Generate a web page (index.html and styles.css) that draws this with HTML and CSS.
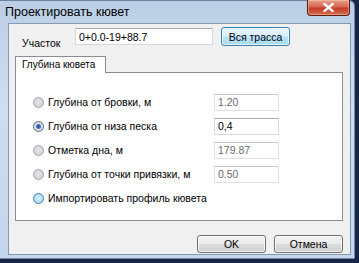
FILE: index.html
```html
<!DOCTYPE html>
<html lang="ru">
<head>
  <meta charset="UTF-8" />
  <meta name="viewport" content="width=device-width, initial-scale=1" />
  <title>Проектировать кювет</title>
  <link rel="stylesheet" href="styles.css">
</head>
<body>

<div class="window">
  <div class="titlebar">
    <span class="title">Проектировать кювет</span>
    <button class="close-btn" aria-label="Закрыть">
      <svg width="11" height="9" viewBox="0 0 11 9">
        <path d="M1.5 1 L9.5 8 M9.5 1 L1.5 8" stroke="#fff" stroke-width="2.4" stroke-linecap="square"/>
      </svg>
    </button>
  </div>

  <div class="client">
    <div class="top-row">
      <label class="section-label">Участок</label>
      <input class="text-box section-input" type="text" value="0+0.0-19+88.7">
      <button class="btn btn-hot">Вся трасса</button>
    </div>

    <div class="tabs">
      <div class="tab active">Глубина кювета</div>
    </div>

    <div class="tab-page">
      <div class="option">
        <label class="radio-label"><span class="radio"></span>Глубина от бровки, м</label>
        <input class="text-box disabled" type="text" value="1.20" disabled>
      </div>
      <div class="option">
        <label class="radio-label"><span class="radio checked"></span>Глубина от низа песка</label>
        <input class="text-box" type="text" value="0,4">
      </div>
      <div class="option">
        <label class="radio-label"><span class="radio"></span>Отметка дна, м</label>
        <input class="text-box disabled" type="text" value="179.87" disabled>
      </div>
      <div class="option">
        <label class="radio-label"><span class="radio"></span>Глубина от точки привязки, м</label>
        <input class="text-box disabled" type="text" value="0.50" disabled>
      </div>
      <div class="option">
        <label class="radio-label"><span class="radio hover"></span>Импортировать профиль кювета</label>
      </div>
    </div>

    <div class="actions">
      <button class="btn">OK</button>
      <button class="btn">Отмена</button>
    </div>
  </div>
</div>

</body>
</html>
```

FILE: styles.css
```css
:root {
  --desktop: rgb(22, 36, 70);
  --frame-top: rgb(186, 206, 229);
  --frame-bottom: rgb(206, 222, 240);
  --face: rgb(240, 240, 240);
  --tab-border: rgb(137, 140, 149);
  --box-border: rgb(171, 173, 179);
  --box-border-light: rgb(214, 217, 224);
  --text: rgb(0, 0, 0);
  --text-disabled: rgb(109, 109, 109);
}

* {
  box-sizing: border-box;
}

body {
  margin: 0;
  width: 359px;
  height: 263px;
  overflow: hidden;
  background-color: var(--desktop);
  font-family: 'Liberation Sans', Arial, sans-serif;
  font-size: 10.5px;
  color: var(--text);
}

.window {
  width: 355px;
  height: 259px;
  display: flex;
  flex-direction: column;
  padding: 0 4px 4px 0;
  background: linear-gradient(180deg, var(--frame-top), var(--frame-bottom) 40%, rgb(196, 214, 235));
  border-top-right-radius: 6px;
  box-shadow: inset -1px 0 0 rgba(40, 60, 90, 0.5), inset 0 -1px 0 rgba(40, 60, 90, 0.5), inset 0 1px 0 rgba(60, 80, 110, 0.6);
}

.titlebar {
  height: 23px;
  display: flex;
  align-items: flex-start;
  padding-left: 5px;
}

.title {
  font-size: 12.5px;
  margin-top: 5px;
  color: rgb(0, 0, 0);
}

.close-btn {
  margin-left: auto;
  margin-right: 1px;
  width: 43px;
  height: 16px;
  padding: 0;
  display: flex;
  align-items: center;
  justify-content: center;
  border: 1px solid rgb(92, 28, 20);
  border-top: none;
  border-radius: 0 0 4px 4px;
  background: linear-gradient(180deg, rgb(230, 160, 140), rgb(214, 104, 80) 45%, rgb(196, 60, 36) 55%, rgb(210, 110, 80));
  box-shadow: inset 0 0 0 1px rgba(255, 200, 180, 0.5);
}

.client {
  flex: 1;
  margin-left: 8px;
  display: flex;
  flex-direction: column;
  background-color: var(--face);
  border: 1px solid rgb(132, 152, 178);
}

.top-row {
  display: flex;
  align-items: flex-start;
  margin: 3px 0 0 13px;
}

.section-label {
  width: 53px;
  margin-top: 10px;
}

.text-box {
  height: 17px;
  padding: 0 3px;
  font-family: inherit;
  font-size: 10.5px;
  color: var(--text);
  background: #fff;
  border: 1px solid var(--box-border-light);
  border-top-color: var(--box-border);
  outline: none;
}

.text-box.disabled {
  color: var(--text-disabled);
  border-color: rgb(222, 224, 228);
  border-top-color: rgb(200, 202, 208);
}

.section-input {
  width: 138px;
  margin-top: 1px;
}

.btn {
  width: 69px;
  height: 19px;
  padding: 0;
  font-family: inherit;
  font-size: 10.5px;
  color: var(--text);
  border: 1px solid rgb(112, 112, 112);
  border-radius: 3px;
  background: linear-gradient(180deg, rgb(242, 242, 242), rgb(235, 235, 235) 50%, rgb(221, 221, 221) 50%, rgb(207, 207, 207));
  box-shadow: inset 0 0 0 1px rgba(255, 255, 255, 0.7);
}

.btn-hot {
  margin-left: 8px;
  border-color: rgb(60, 127, 177);
  background: linear-gradient(180deg, rgb(234, 246, 253), rgb(217, 240, 252) 50%, rgb(190, 230, 253) 50%, rgb(167, 217, 245));
}

.tabs {
  display: flex;
  margin: 7px 0 0 6px;
}

.tab {
  width: 91px;
  height: 17px;
  padding: 2px 0 0 6px;
  font-size: 10px;
  border: 1px solid var(--tab-border);
  border-bottom: none;
  background: #fff;
  position: relative;
  z-index: 1;
  margin-bottom: -1px;
}

.tab-page {
  width: 328px;
  height: 149px;
  margin-left: 6px;
  padding: 19px 0 0 17px;
  background: #fff;
  border: 1px solid var(--tab-border);
  display: flex;
  flex-direction: column;
  gap: 4px;
}

.option {
  display: grid;
  grid-template-columns: 181px 65px;
  align-items: center;
  height: 20px;
}

.radio-label {
  display: flex;
  align-items: center;
  gap: 4px;
  white-space: nowrap;
}

.radio {
  width: 11px;
  height: 11px;
  border-radius: 50%;
  border: 1px solid rgb(160, 164, 172);
  background: radial-gradient(circle at 50% 45%, rgb(230, 232, 235), rgb(200, 203, 208));
  flex-shrink: 0;
}

.radio.checked {
  border-color: rgb(100, 110, 130);
  background: radial-gradient(circle, rgb(40, 70, 130) 0, rgb(70, 120, 190) 2px, rgb(220, 226, 234) 3px, rgb(196, 200, 208));
}

.radio.hover {
  border-color: rgb(60, 130, 190);
  background: radial-gradient(circle at 50% 45%, rgb(215, 240, 252), rgb(160, 210, 240));
}

.actions {
  display: flex;
  justify-content: flex-end;
  gap: 8px;
  margin: 14px 7px 0 0;
}

.actions .btn {
  height: 18px;
}
```
